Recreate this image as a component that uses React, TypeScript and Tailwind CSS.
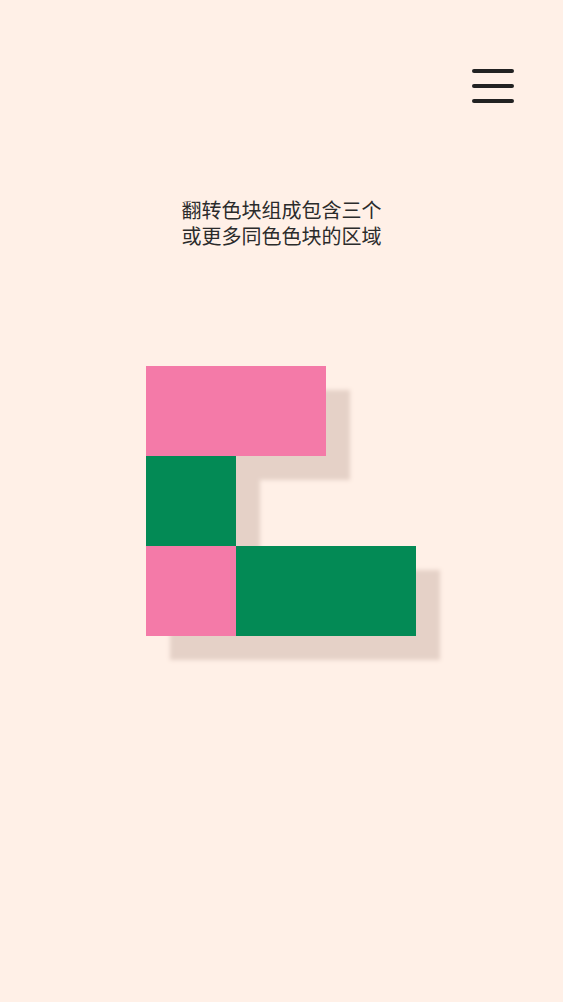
import React from "react";

export default function App() {
  return (
    <div
      className="min-h-[1002px] w-full bg-[#fff0e7] flex flex-col"
      style={{ fontFamily: '"Noto Sans CJK SC", "Noto Sans", sans-serif' }}
    >
      {/* Top bar */}
      <div className="flex justify-end pt-[69px] pr-[49px]">
        <button className="flex flex-col gap-[11px] w-[42px]" aria-label="menu">
          <span className="block h-[4px] w-full rounded-full bg-[#222]" />
          <span className="block h-[4px] w-full rounded-full bg-[#222]" />
          <span className="block h-[4px] w-full rounded-full bg-[#222]" />
        </button>
      </div>

      {/* Hint */}
      <p className="mt-[94px] text-center text-[20px] leading-[26px] text-[#2b2b2b]">
        翻转色块组成包含三个
        <br />
        或更多同色色块的区域
      </p>

      {/* Board */}
      <div className="mt-[117px] flex justify-center pr-[2px]">
        <div className="grid grid-cols-[90px_90px_90px] grid-rows-[90px_90px_90px] drop-shadow-[24px_24px_2px_#e5d1c7]">
          <div className="col-start-1 col-span-2 row-start-1 bg-[#f47aa8]" />
          <div className="col-start-1 row-start-2 bg-[#038a55]" />
          <div className="col-start-1 row-start-3 bg-[#f47aa8]" />
          <div className="col-start-2 col-span-2 row-start-3 bg-[#038a55]" />
        </div>
      </div>
    </div>
  );
}
